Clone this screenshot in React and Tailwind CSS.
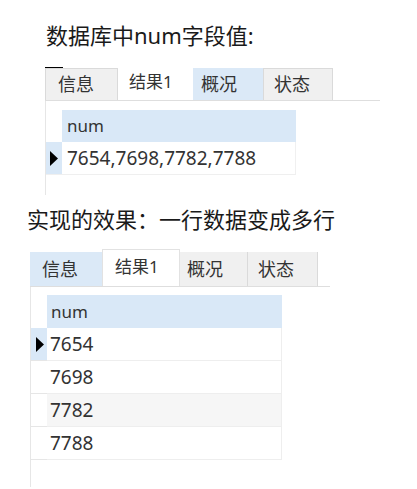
import React from 'react';

const font = { fontFamily: '"Noto Sans", "Noto Sans CJK SC", sans-serif' };

const Arrow = () => (
  <svg width="10" height="15" viewBox="0 0 10 15" className="block">
    <polygon points="1,0 9,7.5 1,15" fill="#000" />
  </svg>
);

const Tab = ({ label, className, textClass = '' }) => (
  <div className={`flex items-center shrink-0 text-[18px] text-[#333] ${className}`}>
    <span className={textClass}>{label}</span>
  </div>
);

export default function App() {
  return (
    <div className="w-[417px] h-[489px] bg-white overflow-hidden" style={font}>
      {/* top section */}
      <div className="h-[67px] pt-[20px] pl-[46px] text-[22px] leading-[30px] text-[#1a1a1a]">
        数据库中num字段值:
      </div>
      <div className="ml-[45px] w-[18px] h-px bg-black" />
      <div className="ml-[45px] w-[335px] h-[33px] flex border-b border-[#dedede]">
        <Tab label="信息" className="w-[73px] pl-[12px] bg-[#f0f0f0] border border-[#dadada] border-b-0" />
        <Tab label="结果1" className="w-[75px] pl-[11px] bg-white" textClass="-mt-[5px] text-[17px]" />
        <Tab label="概况" className="w-[70px] pl-[8px] bg-[#dbe9f7]" />
        <Tab label="状态" className="w-[70px] pl-[10px] bg-[#f0f0f0] border border-[#dadada] border-b-0" />
      </div>
      <div className="ml-[45px] h-[94px] border-l border-[#e6e6e6] pt-[9px]">
        <div className="flex h-[32px]">
          <div className="w-[16px]" />
          <div className="w-[234px] bg-[#d9e8f7] pl-[5px] flex items-center text-[17px] text-[#333]">num</div>
        </div>
        <div className="flex w-fit h-[33px] border-b border-[#efefef]">
          <div className="w-[16px] bg-[#d9e8f7] flex items-center pl-[3px]">
            <Arrow />
          </div>
          <div className="w-[234px] pl-[5px] flex items-center text-[19px] text-[#333] border-r border-[#f0f0f0]">
            7654,7698,7782,7788
          </div>
        </div>
      </div>

      {/* bottom section */}
      <div className="h-[55px] pt-[9px] pl-[27px] text-[22px] leading-[30px] text-[#1a1a1a]">
        实现的效果：一行数据变成多行
      </div>
      <div className="ml-[30px] w-[300px] h-[37px] flex items-end border-b border-[#dedede]">
        <Tab label="信息" className="w-[72px] h-[34px] pl-[12px] bg-[#dbe9f7]" />
        <Tab label="结果1" className="w-[78px] h-[37px] pl-[12px] bg-white border border-[#e2e2e2] border-b-0" textClass="-mt-[2px] text-[17px]" />
        <Tab label="概况" className="w-[68px] h-[34px] pl-[7px] bg-[#f0f0f0] border-r border-[#dadada]" />
        <Tab label="状态" className="w-[70px] h-[34px] pl-[10px] bg-[#f0f0f0] border-r border-[#dadada]" />
      </div>
      <div className="ml-[30px] h-[200px] border-l border-[#e6e6e6] pt-[8px]">
        <div className="flex h-[33px]">
          <div className="w-[16px]" />
          <div className="w-[235px] bg-[#d9e8f7] pl-[4px] flex items-center text-[17px] text-[#333]">num</div>
        </div>
        {['7654', '7698', '7782', '7788'].map((v, i) => (
          <div key={v} className="flex h-[33px]">
            <div className={`w-[16px] flex items-center pl-[4px] border-b border-[#e6e6e6] ${i === 0 ? 'bg-[#d9e8f7]' : 'bg-white'}`}>
              {i === 0 && <Arrow />}
            </div>
            <div className={`w-[235px] pl-[3px] flex items-center text-[19px] text-[#333] border-b border-r border-[#eeeeee] ${i === 2 ? 'bg-[#f6f6f6]' : 'bg-white'}`}>
              {v}
            </div>
          </div>
        ))}
      </div>
    </div>
  );
}
